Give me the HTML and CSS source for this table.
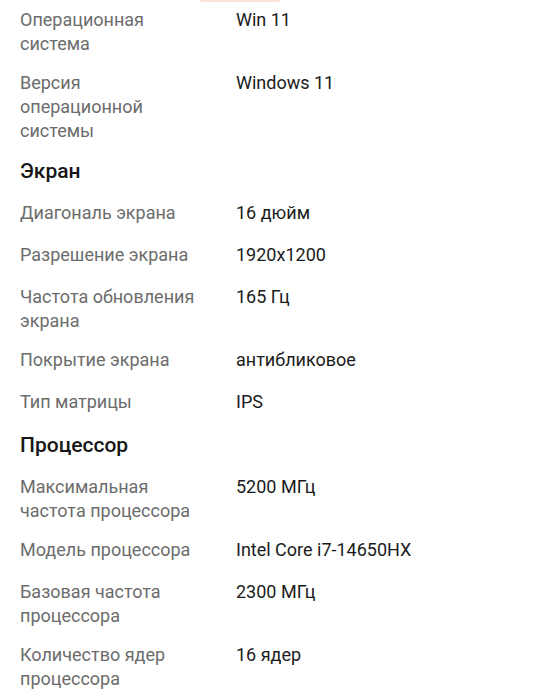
FILE: index.html
```html
<!DOCTYPE html>
<html lang="ru">
<head>
<meta charset="utf-8">
<link rel="stylesheet" href="styles.css">
</head>
<body>
<div class="page">
  <div class="top-tab"></div>
  <div class="specs">
    <div class="row"><div class="label">Операционная система</div><div class="value">Win 11</div></div>
    <div class="row"><div class="label">Версия операционной системы</div><div class="value">Windows 11</div></div>
    <h2 class="heading">Экран</h2>
    <div class="row"><div class="label">Диагональ экрана</div><div class="value">16 дюйм</div></div>
    <div class="row"><div class="label">Разрешение экрана</div><div class="value">1920x1200</div></div>
    <div class="row"><div class="label">Частота обновления экрана</div><div class="value">165 Гц</div></div>
    <div class="row"><div class="label">Покрытие экрана</div><div class="value">антибликовое</div></div>
    <div class="row"><div class="label">Тип матрицы</div><div class="value">IPS</div></div>
    <h2 class="heading">Процессор</h2>
    <div class="row"><div class="label">Максимальная частота процессора</div><div class="value">5200 МГц</div></div>
    <div class="row"><div class="label">Модель процессора</div><div class="value">Intel Core i7-14650HX</div></div>
    <div class="row"><div class="label">Базовая частота процессора</div><div class="value">2300 МГц</div></div>
    <div class="row"><div class="label">Количество ядер процессора</div><div class="value">16 ядер</div></div>
  </div>
</div>
</body>
</html>
```

FILE: styles.css
```css
html, body {
  margin: 0;
  padding: 0;
  background: #ffffff;
}
body {
  font-family: Roboto, "Noto Sans", sans-serif;
  color: #1b1b1b;
  overflow: hidden;
}
.page {
  width: 540px;
  height: 699px;
  overflow: hidden;
}
.top-tab {
  margin-left: 200px;
  width: 80px;
  height: 2px;
  background: #fbe2da;
  border-radius: 0 0 6px 6px;
}
.specs {
  margin-top: 6px;
  padding: 0 20px;
  display: flex;
  flex-direction: column;
  gap: 15px;
}
.row {
  display: grid;
  grid-template-columns: 180px 1fr;
  column-gap: 36px;
  min-height: 27px;
  font-size: 18px;
  line-height: 24px;
}
.label {
  color: #6c6c6c;
}
.value {
  color: #1b1b1b;
}
.heading {
  margin: 0;
  font-size: 21px;
  font-weight: 500;
  line-height: 27px;
  color: #161616;
}
.heading + .row {
  margin-top: 1px;
}
```
